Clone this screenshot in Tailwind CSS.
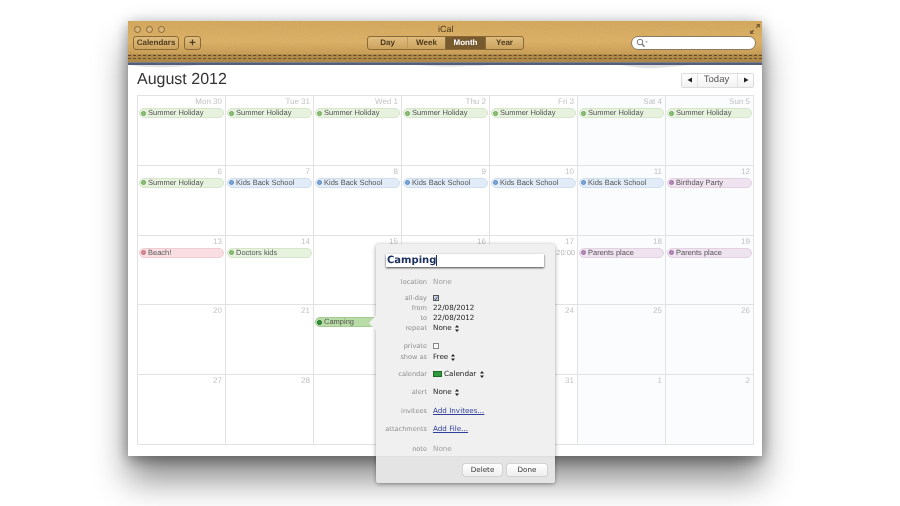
<!DOCTYPE html>
<html lang="en">
<head>
    <meta charset="UTF-8">
    <title>iCal</title>
    <script src="https://cdn.jsdelivr.net/npm/@tailwindcss/browser@4"></script>
</head>
<body class="bg-white w-[900px] h-[506px] overflow-hidden font-['Liberation_Sans',sans-serif] [text-rendering:geometricPrecision]">
    <div class="relative w-[634px] h-[435px] ml-[128px] mt-[21px] bg-white flex flex-col blur-[0.35px] shadow-[0_24px_32px_rgba(0,0,0,0.45),0_4px_12px_rgba(0,0,0,0.3),0_0_20px_rgba(0,0,0,0.12)]">
        <!-- toolbar -->
        <div class="relative h-[41px] shrink-0 overflow-hidden bg-gradient-to-b from-[#d3a860] via-[#dcb169] to-[#bd9350]">
            <svg class="absolute inset-0 opacity-20" width="634" height="41">
                <filter id="grain"><feTurbulence type="fractalNoise" baseFrequency="0.9" numOctaves="2"/><feColorMatrix values="0 0 0 0 0.45  0 0 0 0 0.27  0 0 0 0 0.03  0 0 0 1.2 -0.4"/></filter>
                <rect width="634" height="41" filter="url(#grain)"/>
            </svg>
            <div class="relative flex items-center h-[15px] mt-[1px]">
                <div class="flex gap-[5px] pl-[6px]">
                    <span class="w-[7px] h-[7px] rounded-full border border-[#86683a] bg-[#dcb678]"></span>
                    <span class="w-[7px] h-[7px] rounded-full border border-[#86683a] bg-[#dcb678]"></span>
                    <span class="w-[7px] h-[7px] rounded-full border border-[#86683a] bg-[#dcb678]"></span>
                </div>
                <span class="absolute left-[310px] top-[2px] text-[9px] leading-[11px] text-[#4a3920]">iCal</span>
                <svg class="absolute left-[622px] top-[2px]" width="10" height="10" viewBox="0 0 10 10" fill="#7d6239"><path d="M6 0h4v4L8.7 2.6 7 4.2 5.9 3.1 7.4 1.4zM0 10V6l1.4 1.3L3 5.8l1.1 1.1-1.6 1.7L4 10z"/></svg>
            </div>
            <div class="relative flex items-center h-[14px] mt-[-1px] pl-[5px]">
                <div class="w-[46px] h-[14px] rounded-[3px] border border-[#8a6a37] bg-gradient-to-b from-[#e0bd7e] to-[#cba35f] flex items-center justify-center text-[8px] font-bold text-[#4b3a1f]">Calendars</div>
                <div class="w-[17px] h-[14px] ml-[5px] rounded-[3px] border border-[#8a6a37] bg-gradient-to-b from-[#e0bd7e] to-[#cba35f] flex items-center justify-center text-[11px] leading-none font-bold text-[#4b3a1f]">+</div>
                <div class="ml-[166px] w-[157px] h-[14px] rounded-[3px] border border-[#8a6a37] flex overflow-hidden text-[8px] font-bold text-[#4b3a1f] bg-gradient-to-b from-[#e0bd7e] to-[#cba35f]">
                    <div class="w-[40px] flex items-center justify-center border-r border-[#c09a5c]">Day</div>
                    <div class="w-[38px] flex items-center justify-center border-r border-[#8a6a37]">Week</div>
                    <div class="w-[39px] flex items-center justify-center bg-[#775a2e] text-white">Month</div>
                    <div class="flex-1 flex items-center justify-center border-l border-[#8a6a37]">Year</div>
                </div>
                <div class="ml-[107px] w-[125px] h-[14px] rounded-full bg-white border border-[#8a7a60] flex items-center pl-[4px]">
                    <svg width="12" height="10" viewBox="0 0 12 10" fill="none" stroke="#777"><circle cx="4" cy="4" r="2.8"/><path d="M6 6l2.5 2.8" stroke-width="1.3"/><path d="M9.5 3.5h2.2L10.6 5z" fill="#777" stroke="none"/></svg>
                </div>
            </div>
            <div class="absolute left-0 right-0 top-[33px] h-[8px] bg-[#a98346]/70">
                <div class="mt-[1px] border-t border-dashed border-[#5c4726]"></div>
                <div class="mt-[2px] border-t border-dashed border-[#65502c]"></div>
            </div>
        </div>
        <div class="h-[1px] bg-[#7a7f8c]"></div>
        <div class="h-[2px] bg-[#565d78]"></div>

        <!-- paper edge -->
        <svg class="absolute left-0 top-[44px]" width="634" height="5" fill="#e3e4e6">
            <path d="M2 0c10 2 30 3 42 2 14-1 20-1 30-2zM290 0c20 2 34 2 50 1 8 0 16 0 22-1zM492 0c14 2 24 4 36 3 14-1 24-2 32-3z"/>
        </svg>

        <!-- month header -->
        <div class="flex items-center justify-between h-[30px] pl-[9px] pr-[8px] shrink-0">
            <h1 class="text-[16px] leading-[20px] text-[#333]">August 2012</h1>
            <div class="flex w-[73px] h-[15px] rounded-[2px] border border-[#dcdcdc] bg-gradient-to-b from-white to-[#f2f2f2] text-[9.5px] text-[#555]">
                <div class="w-[16px] flex items-center justify-center border-r border-[#e2e2e2]"><svg width="6" height="6" viewBox="0 0 6 6" fill="#222"><path d="M5 .5v5L.5 3z"/></svg></div>
                <div class="flex-1 flex items-center justify-center pr-[2px]">Today</div>
                <div class="w-[16px] flex items-center justify-center border-l border-[#e2e2e2]"><svg width="6" height="6" viewBox="0 0 6 6" fill="#222"><path d="M1 .5v5L5.5 3z"/></svg></div>
            </div>
        </div>

        <!-- month grid -->
        <div id="grid" class="mx-[9px] w-[617px] h-[350px] grid grid-cols-7 grid-rows-5 border-t border-l border-[#e2e2e2]"></div>

        <!-- event popover -->
        <div class="absolute left-[248px] top-[223px] w-[179px] h-[239px] z-10 rounded-[3px] bg-[#f0f0f0] shadow-[0_1px_4px_rgba(0,0,0,0.4)] flex flex-col font-['DejaVu_Sans',sans-serif] text-[7.2px] leading-[10px]">
            <div class="absolute left-[-7px] top-[70px] w-[8px] h-[18px] bg-[#f0f0f0] [clip-path:polygon(100%_0,0_50%,100%_100%)]"></div>
            <div class="mt-[10px] ml-[10px] w-[158px] h-[13px] bg-white shadow-[0_1px_2px_rgba(0,0,0,0.7)] pl-[1px] flex items-center text-[10px] font-bold text-[#1d3160]">Camping<span class="w-[1px] h-[11px] bg-[#1d3160]"></span></div>

            <div class="flex mt-[10px] h-[10px]"><div class="w-[51px] text-right text-[6.6px] text-[#8f8f8f]">location</div><div class="ml-[6px] text-[#a0a0a0]">None</div></div>
            <div class="flex mt-[6px] h-[10px]"><div class="w-[51px] text-right text-[6.6px] text-[#8f8f8f]">all-day</div><div class="ml-[6px] flex items-center"><span class="w-[6px] h-[6px] border border-[#555] bg-[#cfd6e6] flex items-center justify-center"><svg width="7" height="7" viewBox="0 0 7 7" fill="none" stroke="#1f2f55" stroke-width="1.4"><path d="M1 3.5l1.8 2L6 .5"/></svg></span></div></div>
            <div class="flex h-[10px]"><div class="w-[51px] text-right text-[6.6px] text-[#8f8f8f]">from</div><div class="ml-[6px] text-[#222]">22/08/2012</div></div>
            <div class="flex h-[10px]"><div class="w-[51px] text-right text-[6.6px] text-[#8f8f8f]">to</div><div class="ml-[6px] text-[#222]">22/08/2012</div></div>
            <div class="flex h-[10px]"><div class="w-[51px] text-right text-[6.6px] text-[#8f8f8f]">repeat</div><div class="ml-[6px] flex items-center gap-[3px] text-[#222]">None<svg width="4" height="7" viewBox="0 0 4 7" fill="#222"><path d="M2 0l2 2.6H0zM2 7L0 4.4h4z"/></svg></div></div>
            <div class="flex mt-[8px] h-[10px]"><div class="w-[51px] text-right text-[6.6px] text-[#8f8f8f]">private</div><div class="ml-[6px] flex items-center"><span class="w-[6px] h-[6px] border border-[#888] bg-[#f8f8f8]"></span></div></div>
            <div class="flex mt-[1px] h-[10px]"><div class="w-[51px] text-right text-[6.6px] text-[#8f8f8f]">show as</div><div class="ml-[6px] flex items-center gap-[3px] text-[#222]">Free<svg width="4" height="7" viewBox="0 0 4 7" fill="#222"><path d="M2 0l2 2.6H0zM2 7L0 4.4h4z"/></svg></div></div>
            <div class="flex mt-[7px] h-[10px]"><div class="w-[51px] text-right text-[6.6px] text-[#8f8f8f]">calendar</div><div class="ml-[6px] flex items-center text-[#222]"><span class="w-[9px] h-[6px] mr-[2px] bg-[#2f9a3c] border border-[#1c6a28]"></span>Calendar<svg class="ml-[4px]" width="4" height="7" viewBox="0 0 4 7" fill="#222"><path d="M2 0l2 2.6H0zM2 7L0 4.4h4z"/></svg></div></div>
            <div class="flex mt-[8px] h-[10px]"><div class="w-[51px] text-right text-[6.6px] text-[#8f8f8f]">alert</div><div class="ml-[6px] flex items-center gap-[3px] text-[#222]">None<svg width="4" height="7" viewBox="0 0 4 7" fill="#222"><path d="M2 0l2 2.6H0zM2 7L0 4.4h4z"/></svg></div></div>
            <div class="flex mt-[9px] h-[10px]"><div class="w-[51px] text-right text-[6.6px] text-[#8f8f8f]">invitees</div><div class="ml-[6px] text-[#2f3f99] underline">Add Invitees...</div></div>
            <div class="flex mt-[8px] h-[10px]"><div class="w-[51px] text-right text-[6.6px] text-[#8f8f8f]">attachments</div><div class="ml-[6px] text-[#2f3f99] underline">Add File...</div></div>
            <div class="flex mt-[10px] h-[10px]"><div class="w-[51px] text-right text-[6.6px] text-[#8f8f8f]">note</div><div class="ml-[6px] text-[#a0a0a0]">None</div></div>

            <div class="mt-[2px] h-[27px] flex-1 rounded-b-[3px] bg-[#e4e4e4] border-t border-[#dedede] flex justify-end items-start pt-[7px] pr-[8px] gap-[5px]">
                <div class="w-[39px] h-[12px] rounded-[2px] bg-gradient-to-b from-white to-[#efefef] shadow-[0_0_1px_rgba(0,0,0,0.7)] flex items-center justify-center text-[#333]">Delete</div>
                <div class="w-[40px] h-[12px] rounded-[2px] bg-gradient-to-b from-white to-[#efefef] shadow-[0_0_1px_rgba(0,0,0,0.7)] flex items-center justify-center text-[#333]">Done</div>
            </div>
        </div>
    </div>

    <script>
        const pillStyles = {
            green: ['bg-[#e6f2de] border-[#d5e6c9]', 'bg-[#8cc077] border-[#73a860]'],
            blue: ['bg-[#e1ecf8] border-[#cfdff0]', 'bg-[#7ba6d6] border-[#5f8cc0]'],
            pink: ['bg-[#f9dfe3] border-[#efccd2]', 'bg-[#dd8a98] border-[#c47180]'],
            purple: ['bg-[#f0e3f0] border-[#e2d2e2]', 'bg-[#b58bb8] border-[#9c72a0]'],
            active: ['bg-[#b9dca6] border-[#a5cb91]', 'bg-[#2f9a3c] border-[#1c6a28]']
        };
        const sh = ['Summer Holiday', 'green'], kb = ['Kids Back School', 'blue'], pp = ['Parents place', 'purple'];
        const days = [
            ['Mon 30', sh], ['Tue 31', sh], ['Wed 1', sh], ['Thu 2', sh], ['Fri 3', sh], ['Sat 4', sh], ['Sun 5', sh],
            ['6', sh], ['7', kb], ['8', kb], ['9', kb], ['10', kb], ['11', kb], ['12', ['Birthday Party', 'purple']],
            ['13', ['Beach!', 'pink']], ['14', ['Doctors kids', 'green']], ['15'], ['16'], ['17', null, '20:00'], ['18', pp], ['19', pp],
            ['20'], ['21'], ['22', ['Camping', 'active']], ['23'], ['24'], ['25'], ['26'],
            ['27'], ['28'], ['29'], ['30'], ['31'], ['1'], ['2']
        ];
        document.getElementById('grid').innerHTML = days.map((d, i) => {
            const weekend = i % 7 >= 5;
            let pill = '';
            if (d[1]) {
                const s = pillStyles[d[1][1]];
                pill = `<div class="mx-[1px] h-[10px] rounded-full border flex items-center pl-[1px] text-[#555] ${s[0]}">
                    <span class="w-[5px] h-[5px] rounded-full border mr-[2px] ${s[1]}"></span>${d[1][0]}</div>`;
            }
            if (d[2]) pill = `<div class="h-[10px] pr-[2px] text-right text-[#b5b5b5]">${d[2]}</div>`;
            return `<div class="border-r border-b border-[#e2e2e2] overflow-hidden ${weekend ? 'bg-[#fbfcfe]' : 'bg-white'}">
                <div class="h-[12px] pr-[3px] text-right text-[8px] leading-[12px] text-[#c2c2c2]">${d[0]}</div>
                <div class="text-[7.5px] leading-[10px]">${pill}</div></div>`;
        }).join('');
    </script>
</body>
</html>
